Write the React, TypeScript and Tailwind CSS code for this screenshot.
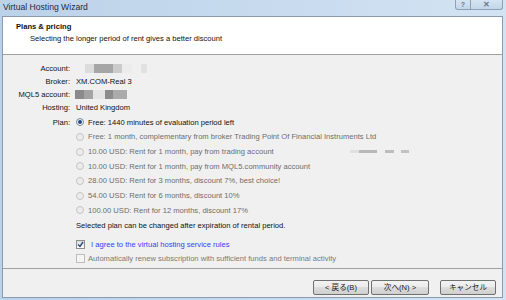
import React from "react";

function Radio({ checked, disabled }: { checked?: boolean; disabled?: boolean }) {
  return (
    <span
      className={`relative inline-block w-[8px] h-[8px] rounded-full border shrink-0 ${
        disabled ? "border-[#c4c4c4] bg-[#ececec]" : "border-[#7a8a99] bg-[linear-gradient(#e9e9e9,#ffffff)]"
      }`}
    >
      {checked && <span className="absolute left-[1px] top-[1px] w-[4px] h-[4px] rounded-full bg-[#1f4a86]" />}
    </span>
  );
}

function Checkbox({ checked, disabled }: { checked?: boolean; disabled?: boolean }) {
  return (
    <span
      className={`relative inline-flex items-center justify-center w-[9px] h-[9px] border shrink-0 ${
        disabled ? "border-[#bdbdbd] bg-[#f4f4f4]" : "border-[#8f8f8f] bg-[linear-gradient(#dcdcdc,#ffffff)]"
      }`}
    >
      {checked && (
        <svg width="7" height="7" viewBox="0 0 7 7">
          <path d="M1 3.5 L3 5.5 L6 1" stroke="#2a4a7a" strokeWidth="1.4" fill="none" />
        </svg>
      )}
    </span>
  );
}

function Btn({ children }: { children: React.ReactNode }) {
  return (
    <div className="h-[15px] flex items-center justify-center rounded-[2px] border border-[#707070] bg-[linear-gradient(#f3f3f3,#ebebeb_45%,#dddddd_50%,#cfcfcf)] text-[7.6px] text-[#222]">
      {children}
    </div>
  );
}

const options = [
  "Free: 1 month, complementary from broker Trading Point Of Financial Instruments Ltd",
  "10.00 USD: Rent for 1 month, pay from trading account",
  "10.00 USD: Rent for 1 month, pay from MQL5.community account",
  "28.00 USD: Rent for 3 months, discount 7%, best choice!",
  "54.00 USD: Rent for 6 months, discount 10%",
  "100.00 USD: Rent for 12 months, discount 17%",
];

export default function App() {
  return (
    <div className="w-[506px] h-[300px] overflow-hidden flex flex-col bg-[linear-gradient(90deg,#bcd2e9,#c9dcef_60%,#d3e3f3)] font-['Liberation_Sans','Noto_Sans_CJK_JP',sans-serif] text-[7.6px] text-[#111] leading-none">
      {/* title bar */}
      <div className="h-[16px] flex items-start justify-between pl-[3px] pr-[3px] shrink-0">
        <div className="text-[8.6px] text-[#1e2a3a] pt-[3px]">Virtual Hosting Wizard</div>
        <div className="flex">
          <div className="w-[16px] h-[10px] border border-t-0 border-[#8ea0b5] rounded-bl-[3px] bg-[linear-gradient(#d6e4f2,#c3d6ea)] flex items-center justify-center text-[7px] text-[#6b7685] font-bold">
            ?
          </div>
          <div className="w-[32px] h-[10px] border border-t-0 border-l-0 border-[#8ea0b5] rounded-br-[3px] bg-[linear-gradient(#d6e4f2,#c3d6ea)] flex items-center justify-center text-[8px] text-[#6b7685] font-bold">
            ✕
          </div>
        </div>
      </div>
      {/* client */}
      <div className="flex-1 ml-[2px] mr-[3px] mb-[2px] border border-[#8a9bb0] flex flex-col bg-[#f0f0f0] min-h-0">
        {/* header */}
        <div className="h-[38px] bg-white border-b border-[#a0a0a0] shrink-0 pl-[13px] pt-[6px]">
          <div className="font-bold">Plans &amp; pricing</div>
          <div className="pl-[14px] pt-[4px]">Selecting the longer period of rent gives a better discount</div>
        </div>
        {/* content */}
        <div className="flex-1 flex flex-col pt-[7px] pl-[70px] min-h-0">
          <div className="h-[13px] flex items-center">
            <span className="w-[0px] flex justify-end"><span className="whitespace-nowrap pr-[3px]">Account:</span></span>
            <span className="ml-[12px] flex h-[9px]">
              <span className="w-[9px] bg-[#dcdcdc]" />
              <span className="w-[19px] bg-[#a6a6a6]" />
              <span className="w-[9px] bg-[#cbcbcb]" />
              <span className="w-[10px] bg-[#ececec]" />
              <span className="w-[9px]" />
              <span className="w-[6px] bg-[#e2e2e2]" />
            </span>
          </div>
          <div className="h-[13px] flex items-center">
            <span className="w-[0px] flex justify-end"><span className="whitespace-nowrap pr-[3px]">Broker:</span></span>
            <span className="ml-[3px]">XM.COM-Real 3</span>
          </div>
          <div className="h-[13px] flex items-center">
            <span className="w-[0px] flex justify-end"><span className="whitespace-nowrap pr-[3px]">MQL5 account:</span></span>
            <span className="ml-[2px] flex h-[9px]">
              <span className="w-[9px] bg-[#8a8a8a]" />
              <span className="w-[9px] bg-[#a3a3a3]" />
              <span className="w-[12px] bg-[#e4e4e4]" />
              <span className="w-[8px] bg-[#8c8c8c]" />
              <span className="w-[14px] bg-[#ababab]" />
            </span>
          </div>
          <div className="h-[14px] flex items-center">
            <span className="w-[0px] flex justify-end"><span className="whitespace-nowrap pr-[3px]">Hosting:</span></span>
            <span className="ml-[3px]">United Kingdom</span>
          </div>
          <div className="h-[14.7px] flex items-center">
            <span className="w-[0px] flex justify-end"><span className="whitespace-nowrap pr-[3px]">Plan:</span></span>
            <span className="ml-[3px] flex items-center gap-[4px]">
              <Radio checked />
              <span>Free: 1440 minutes of evaluation period left</span>
            </span>
          </div>
          {options.map((o, i) => (
            <div key={i} className="h-[14.7px] flex items-center pl-[3px] gap-[4px] text-[#6d6d6d]">
              <Radio disabled />
              <span className="whitespace-nowrap">{o}</span>
              {i === 1 && (
                <span className="ml-[72px] flex h-[3px]">
                  <span className="w-[9px] bg-[#e0e0e0]" />
                  <span className="w-[18px] bg-[#b8b8b8]" />
                  <span className="w-[8px]" />
                  <span className="w-[9px] bg-[#bdbdbd]" />
                  <span className="w-[7px]" />
                  <span className="w-[8px] bg-[#c2c2c2]" />
                </span>
              )}
            </div>
          ))}
          <div className="h-[15px] flex items-center pl-[3px]">
            Selected plan can be changed after expiration of rental period.
          </div>
          <div className="h-[18px] flex items-end pl-[3px]">
            <span className="flex items-center gap-[6px] h-[12px]">
              <Checkbox checked />
              <span className="text-[#3b3bff]">I agree to the virtual hosting service rules</span>
            </span>
          </div>
          <div className="h-[15px] flex items-center pl-[3px] gap-[3px] text-[#7a7a7a]">
            <Checkbox disabled />
            <span>Automatically renew subscription with sufficient funds and terminal activity</span>
          </div>
        </div>
        {/* footer */}
        <div className="h-[29px] shrink-0 border-t border-[#a0a0a0] flex items-start justify-end pt-[11px] pr-[6px]">
          <div className="w-[56px]"><Btn>&lt; 戻る(B)</Btn></div>
          <div className="w-[58px] ml-[2px]"><Btn>次へ(N) &gt;</Btn></div>
          <div className="w-[56px] ml-[11px]"><Btn>キャンセル</Btn></div>
        </div>
      </div>
    </div>
  );
}
